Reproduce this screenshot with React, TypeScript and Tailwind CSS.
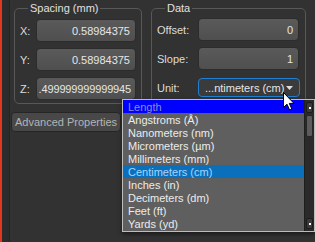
import React from "react";

const units = [
  "Angstroms (Å)",
  "Nanometers (nm)",
  "Micrometers (µm)",
  "Millimeters (mm)",
  "Centimeters (cm)",
  "Inches (in)",
  "Decimeters (dm)",
  "Feet (ft)",
  "Yards (yd)",
];

function NumberBox({ value, width, tight }: { value: string; width: string; tight?: boolean }) {
  return (
    <div
      className={`${width} h-[23px] flex items-center justify-end overflow-hidden rounded-[4px] border border-[#2c2c2c] bg-gradient-to-b from-[#5a5a5a] to-[#4f4f4f] text-[#e6e6e6] whitespace-nowrap ${
        tight ? "pr-[4px] tracking-[-0.15px]" : "pr-[5px]"
      }`}
    >
      <span>{value}</span>
    </div>
  );
}

function Row({ label, labelWidth, children }: { label: string; labelWidth: string; children: React.ReactNode }) {
  return (
    <div className="flex items-center">
      <span className={`${labelWidth} text-[#dcdcdc]`}>{label}</span>
      {children}
    </div>
  );
}

function ScrollButton() {
  return (
    <div className="h-[11px] mx-[1px] flex items-center justify-center rounded-[2px] border border-[#1c1c1c] bg-[#3a3a3a]">
      <div className="w-[2px] h-[2px] bg-white" />
    </div>
  );
}

function Cursor() {
  return (
    <svg width="12" height="19" viewBox="0 0 12 19" className="absolute left-[283px] top-[92px]">
      <path
        d="M0.5 0.5 L0.5 15.5 L4 12.2 L6.6 18 L8.8 17 L6.3 11.4 L11 11.4 Z"
        fill="#ffffff"
        stroke="#000000"
        strokeWidth="1"
        strokeLinejoin="round"
      />
    </svg>
  );
}

export default function App() {
  return (
    <div
      className="relative w-[315px] h-[242px] overflow-hidden flex bg-[#323232] text-[11px] leading-[14px]"
      style={{ fontFamily: '"Liberation Sans", Arial, sans-serif' }}
    >
      <div className="w-[2px] bg-[#e2381f]" />
      <div className="w-[7px] bg-[#2c2c2c]" />
      <div className="w-[1px] bg-[#242424]" />

      <div className="flex flex-col pt-[1px]">
        <div className="flex gap-[9px] ml-[4px]">
          <fieldset className="w-[128px] h-[103px] border border-[#585858] rounded-[5px] px-[5px] pt-[4px]">
            <legend className="ml-[8px] px-[2px] text-[#e0e0e0]">Spacing (mm)</legend>
            <div className="flex flex-col gap-[6px]">
              <Row label="X:" labelWidth="w-[16px]">
                <NumberBox value="0.58984375" width="w-[100px]" />
              </Row>
              <Row label="Y:" labelWidth="w-[16px]">
                <NumberBox value="0.58984375" width="w-[100px]" />
              </Row>
              <Row label="Z:" labelWidth="w-[16px]">
                <NumberBox value=".499999999999945" width="w-[100px]" tight />
              </Row>
            </div>
          </fieldset>

          <fieldset className="w-[154px] h-[110px] border border-[#585858] rounded-[5px] pl-[5px] pr-[5px] pt-[3px]">
            <legend className="ml-[8px] px-[2px] text-[#e0e0e0]">Data</legend>
            <div className="flex flex-col gap-[6px]">
              <Row label="Offset:" labelWidth="w-[41px]">
                <NumberBox value="0" width="w-[101px]" />
              </Row>
              <Row label="Slope:" labelWidth="w-[41px]">
                <NumberBox value="1" width="w-[101px]" />
              </Row>
              <div className="flex items-center mt-[2px]">
                <span className="w-[41px] text-[#dcdcdc]">Unit:</span>
                <div className="w-[102px] h-[19px] flex items-center justify-between rounded-[4px] border-[1.5px] border-[#1f7fd2] bg-[#3b3b3b] pl-[6px] pr-[6px] text-[#e6e6e6] whitespace-nowrap">
                  <span>...ntimeters (cm)</span>
                  <svg width="7" height="4" viewBox="0 0 7 4">
                    <path d="M0 0 L7 0 L3.5 4 Z" fill="#dedede" />
                  </svg>
                </div>
              </div>
            </div>
          </fieldset>
        </div>

        <button className="ml-[1px] mt-[1px] w-[110px] h-[20px] rounded-[4px] border border-[#262626] bg-[#484848] text-[#b4b4b4] text-[11px] leading-[14px] text-center">
          Advanced Properties
        </button>
      </div>

      <div className="absolute left-[122px] top-[99px] w-[193px] h-[133px] flex border border-[#bdbdbd] bg-[#5f5f5f] shadow-[0_2px_4px_rgba(0,0,0,0.5)]">
        <div className="flex-1 flex flex-col">
          <div className="h-[13px] flex items-center pl-[5px] bg-[#0000ff] text-[#8c8cd8]">Length</div>
          {units.map((u) => (
            <div
              key={u}
              className={
                u === "Centimeters (cm)"
                  ? "h-[13px] flex items-center pl-[5px] bg-[#0a70bb] text-[#a8d4ff] whitespace-nowrap"
                  : "h-[13px] flex items-center pl-[5px] text-[#ececec] whitespace-nowrap"
              }
            >
              {u}
            </div>
          ))}
        </div>
        <div className="w-[10px] flex flex-col gap-[2px] py-[2px] bg-[#2a2a2a] border-l border-[#1e1e1e]">
          <ScrollButton />
          <div className="h-[22px] mx-[1px] rounded-[2px] border border-[#262626] bg-[#5c5c5c]" />
          <div className="flex-1" />
          <ScrollButton />
        </div>
      </div>

      <Cursor />
    </div>
  );
}
